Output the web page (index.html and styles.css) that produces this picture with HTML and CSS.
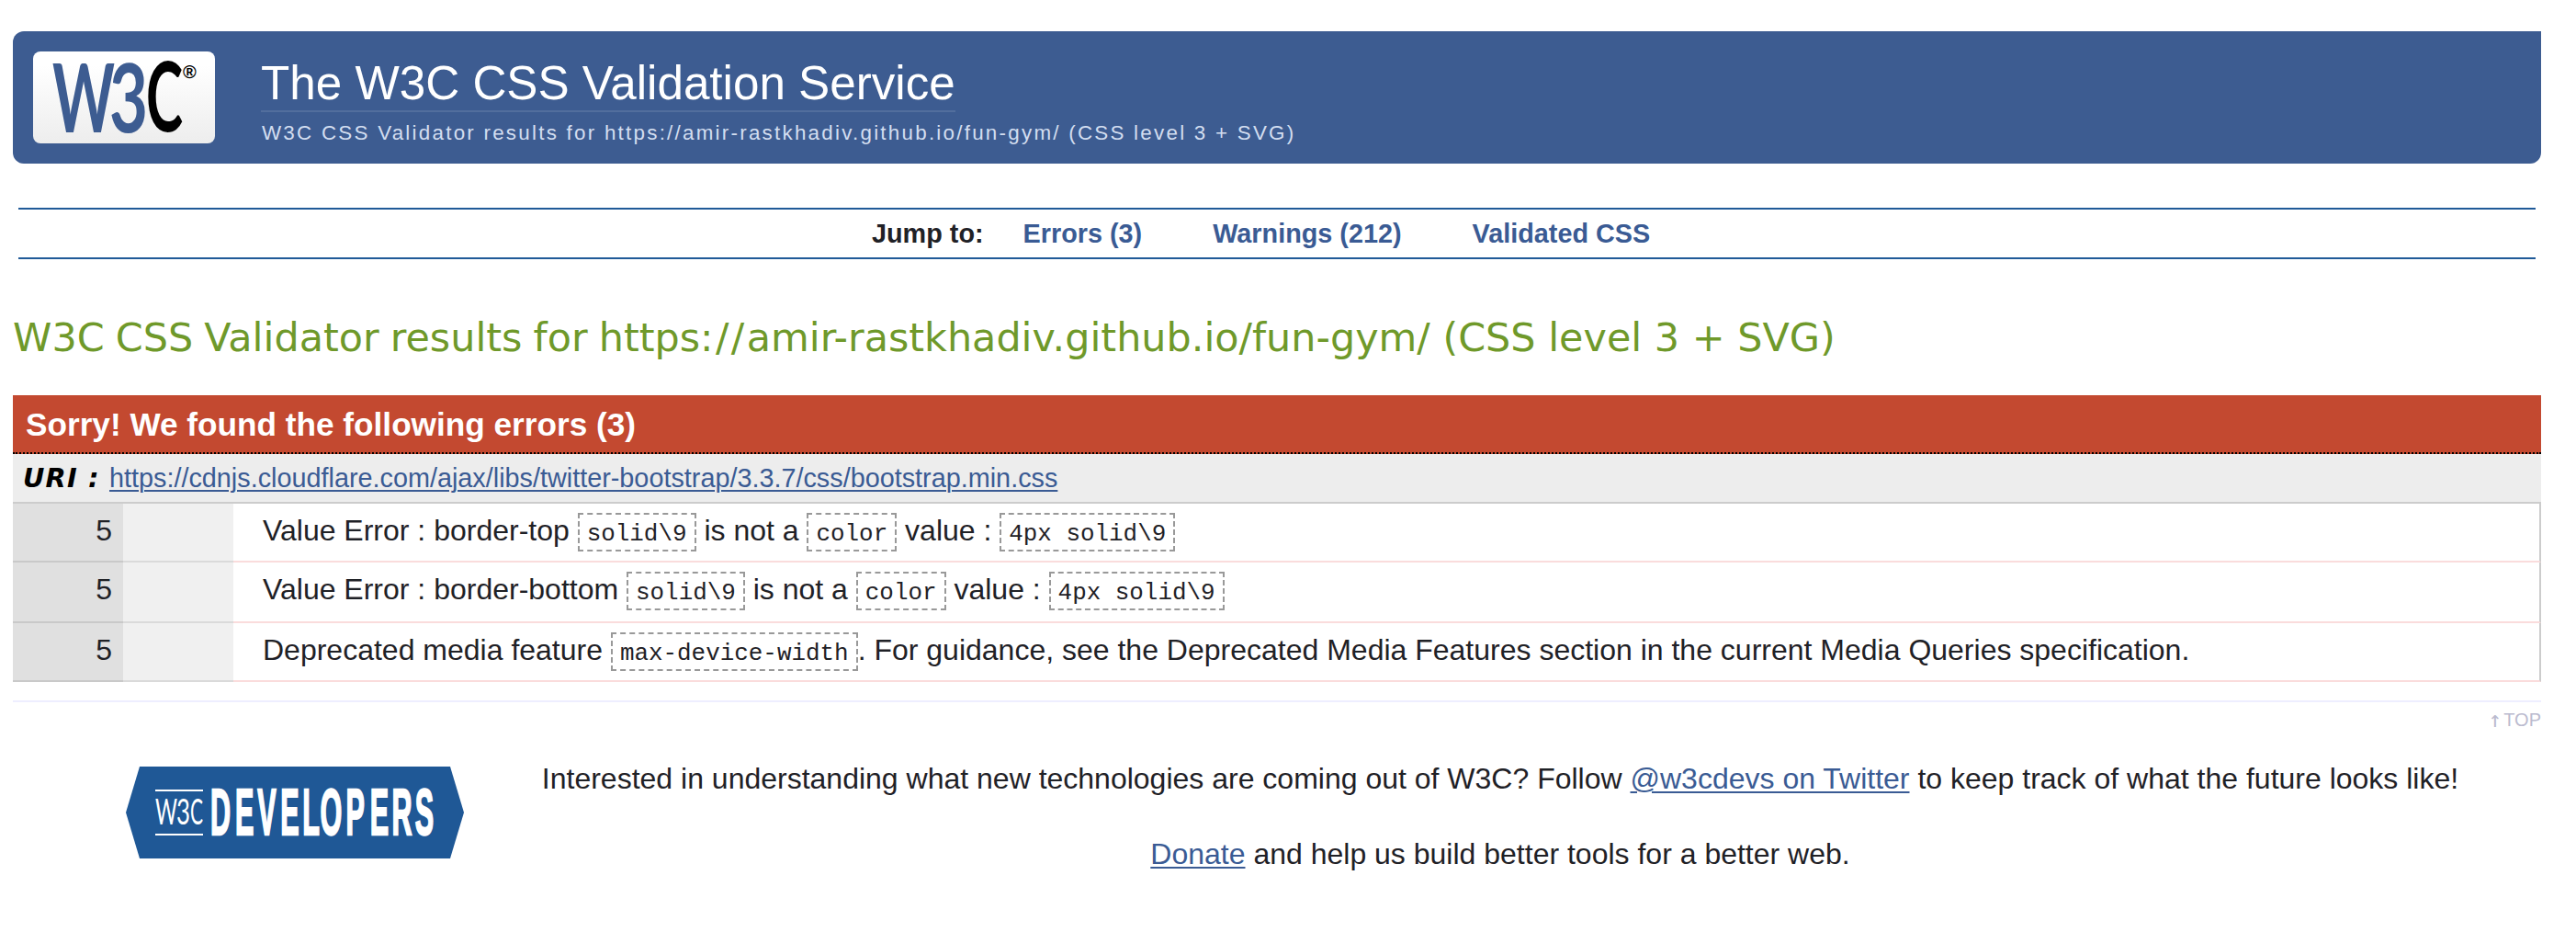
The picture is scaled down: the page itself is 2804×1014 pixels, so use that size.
FILE: index.html
```html
<!DOCTYPE html>
<html lang="en">
<head>
<meta charset="utf-8">
<title>W3C CSS Validator results</title>
<link rel="stylesheet" href="styles.css">
</head>
<body>
<header class="banner">
  <svg class="logo" viewBox="0 0 198 100" role="img" aria-label="W3C">
    <defs><linearGradient id="plate" x1="0" y1="0" x2="0" y2="1"><stop offset=".15" stop-color="#fff"/><stop offset="1" stop-color="#ededed"/></linearGradient></defs>
    <rect width="198" height="100" rx="8" fill="url(#plate)"/>
    <g class="logo-blue">
      <text x="21" y="88" font-size="103" textLength="68" lengthAdjust="spacingAndGlyphs">W</text>
      <text x="83" y="88" font-size="103" textLength="42" lengthAdjust="spacingAndGlyphs">3</text>
    </g>
    <text class="logo-c" x="123" y="87" font-size="105" textLength="40" lengthAdjust="spacingAndGlyphs">C</text>
    <text class="logo-r" x="163" y="29" font-size="20">®</text>
  </svg>
  <div class="heading">
    <h1>The W3C CSS Validation Service</h1>
    <p>W3C CSS Validator results for https://amir-rastkhadiv.github.io/fun-gym/ (CSS level 3 + SVG)</p>
  </div>
</header>
<nav class="jump">
  <span>Jump to:</span>
  <a class="first">Errors (3)</a>
  <a>Warnings (212)</a>
  <a>Validated CSS</a>
</nav>
<main>
  <h2><span class="lead">W3C CSS Validator results for </span>https<span class="slashes">://</span>amir-rastkhadiv.github.io/fun-gym/ (CSS level 3 + SVG)</h2>
  <h3>Sorry! We found the following errors (3)</h3>
  <div class="uri"><strong>URI :</strong><a class="link">https://cdnjs.cloudflare.com/ajax/libs/twitter-bootstrap/3.3.7/css/bootstrap.min.css</a></div>
  <div class="errors">
    <div class="row"><span class="line">5</span><span class="context"></span><p>Value Error : border-top <code>solid\9</code> is not a <code>color</code> value : <code>4px solid\9</code></p></div>
    <div class="row tall"><span class="line">5</span><span class="context"></span><p>Value Error : border-bottom <code>solid\9</code> is not a <code>color</code> value : <code>4px solid\9</code></p></div>
    <div class="row"><span class="line">5</span><span class="context"></span><p>Deprecated media feature <code>max-device-width</code>. For guidance, see the Deprecated Media Features section in the current Media Queries specification.</p></div>
  </div>
  <div class="top"><a><span class="arrow">↑</span>TOP</a></div>
</main>
<footer>
  <svg class="badge" viewBox="0 0 368 100" role="img" aria-label="W3C Developers">
    <polygon points="15,0 353,0 368,50 353,100 15,100 0,50" fill="#1f5896"/>
    <rect x="32" y="25" width="52" height="2" fill="#fff"/>
    <rect x="32" y="73" width="52" height="2" fill="#fff"/>
    <g class="badge-w3c">
      <text x="32" y="63" font-size="38" textLength="24" lengthAdjust="spacingAndGlyphs">W</text>
      <text x="55" y="63" font-size="38" textLength="15" lengthAdjust="spacingAndGlyphs">3</text>
      <text x="70" y="63" font-size="38" textLength="14" lengthAdjust="spacingAndGlyphs">C</text>
    </g>
    <g transform="scale(.43 1)">
      <text class="badge-dev" y="74.5" font-size="71" x="214 277 333 391 447 492 557 618 673 732">DEVELOPERS</text>
    </g>
  </svg>
  <div class="notes">
    <p>Interested in understanding what new technologies are coming out of W3C? Follow <a class="link">@w3cdevs on Twitter</a> to keep track of what the future looks like!</p>
    <p><a class="link">Donate</a> and help us build better tools for a better web.</p>
  </div>
</footer>
</body>
</html>
```
FILE: styles.css
```css
* { box-sizing: border-box; }
body {
  margin: 0;
  padding: 34px 38px 0 14px;
  background: #fff;
  color: #1f2126;
  font: 32px/36px "Liberation Sans", Arial, sans-serif;
}
h1, h2, h3, p { margin: 0; font-weight: normal; }

.banner {
  display: flex;
  height: 144px;
  padding-left: 22px;
  background: #3d5c91;
  border-radius: 12px 0 12px 12px;
}
.logo { width: 198px; height: 100px; margin-top: 22px; }
.logo text { font-family: Lato, sans-serif; font-weight: bold; }
.logo-blue { fill: #3d5c91; }
.logo .logo-r { font-family: "Liberation Sans", sans-serif; }
.heading { margin: 27px 0 0 50px; }
.heading h1 {
  width: max-content;
  font-size: 51.2px;
  line-height: 59px;
  color: #fff;
  border-bottom: 2px solid #526e9d;
}
.heading p {
  margin-top: 10px;
  padding-left: 1px;
  font-size: 22.4px;
  line-height: 25px;
  letter-spacing: 2.24px;
  color: #d3def0;
}

.jump {
  display: flex;
  height: 56px;
  margin: 48px 6px 0;
  padding-left: 929px;
  border: solid #205a98;
  border-width: 2px 0;
  font-size: 28.8px;
  font-weight: bold;
  line-height: 52px;
}
.jump a { margin-left: 77px; color: #3a5b94; }
.jump .first { margin-left: 43px; }

h2 {
  margin: 60px 0 38px;
  font: 42.9px/50px "DejaVu Sans", Verdana, sans-serif;
  color: #6f992a;
}
.lead { word-spacing: -1.5px; }
.slashes { letter-spacing: 2.4px; }
h3 {
  height: 64px;
  padding: 12px 14px 0;
  background: #c34930;
  border-bottom: 2px dotted #000;
  color: #fff;
  font-size: 35.2px;
  font-weight: bold;
  line-height: 39px;
}
.link { color: #3a5b94; text-decoration: underline; text-decoration-thickness: 2px; text-underline-offset: 3px; }
.uri {
  display: flex;
  height: 52px;
  padding-left: 11px;
  background: #ededed;
  font-size: 28.8px;
  line-height: 52px;
}
.uri strong {
  width: 94px;
  color: #000;
  font: italic bold 28.8px/52px "DejaVu Sans", Verdana, sans-serif;
  letter-spacing: 1.2px;
}

.errors { border-top: 2px solid #ccc; }
.row { display: grid; grid-template-columns: 120px 120px 1fr; height: 64px; }
.row.tall { height: 66px; }
.line { padding: 11px 12px 0; background: #e0e0e0; border-bottom: 2px solid #c9c9c9; text-align: right; }
.context { background: #f0f0f0; border-bottom: 2px solid #dadada; }
.row p { padding: 11px 0 0 32px; border-bottom: 2px solid #fadcdc; border-right: 2px solid #ccc; white-space: nowrap; }
code {
  padding: 6px 8px 2px;
  border: 2px dashed #999;
  font: 25.92px "Liberation Mono", "Courier New", monospace;
}
.top {
  height: 32px;
  margin-top: 20px;
  padding-top: 8px;
  border-top: 2px solid #eeeeff;
  color: #bbbbcf;
  font-size: 20px;
  line-height: 22px;
  text-align: right;
}
.top a { display: flex; justify-content: flex-end; }
.arrow { margin-right: 2px; font-family: "DejaVu Sans Mono", monospace; font-size: 24px; line-height: 23px; }

footer { display: flex; padding: 35px 0 0 123px; }
.badge { width: 368px; height: 100px; margin-top: 5px; }
.badge-w3c text { fill: #fff; font-family: Lato, sans-serif; }
.badge-dev { fill: #fff; stroke: #fff; stroke-width: 2.4px; font-family: "Liberation Sans", sans-serif; font-weight: bold; }
.notes { display: flex; flex: 1; flex-direction: column; gap: 46px; padding-right: 5px; text-align: center; }
```
